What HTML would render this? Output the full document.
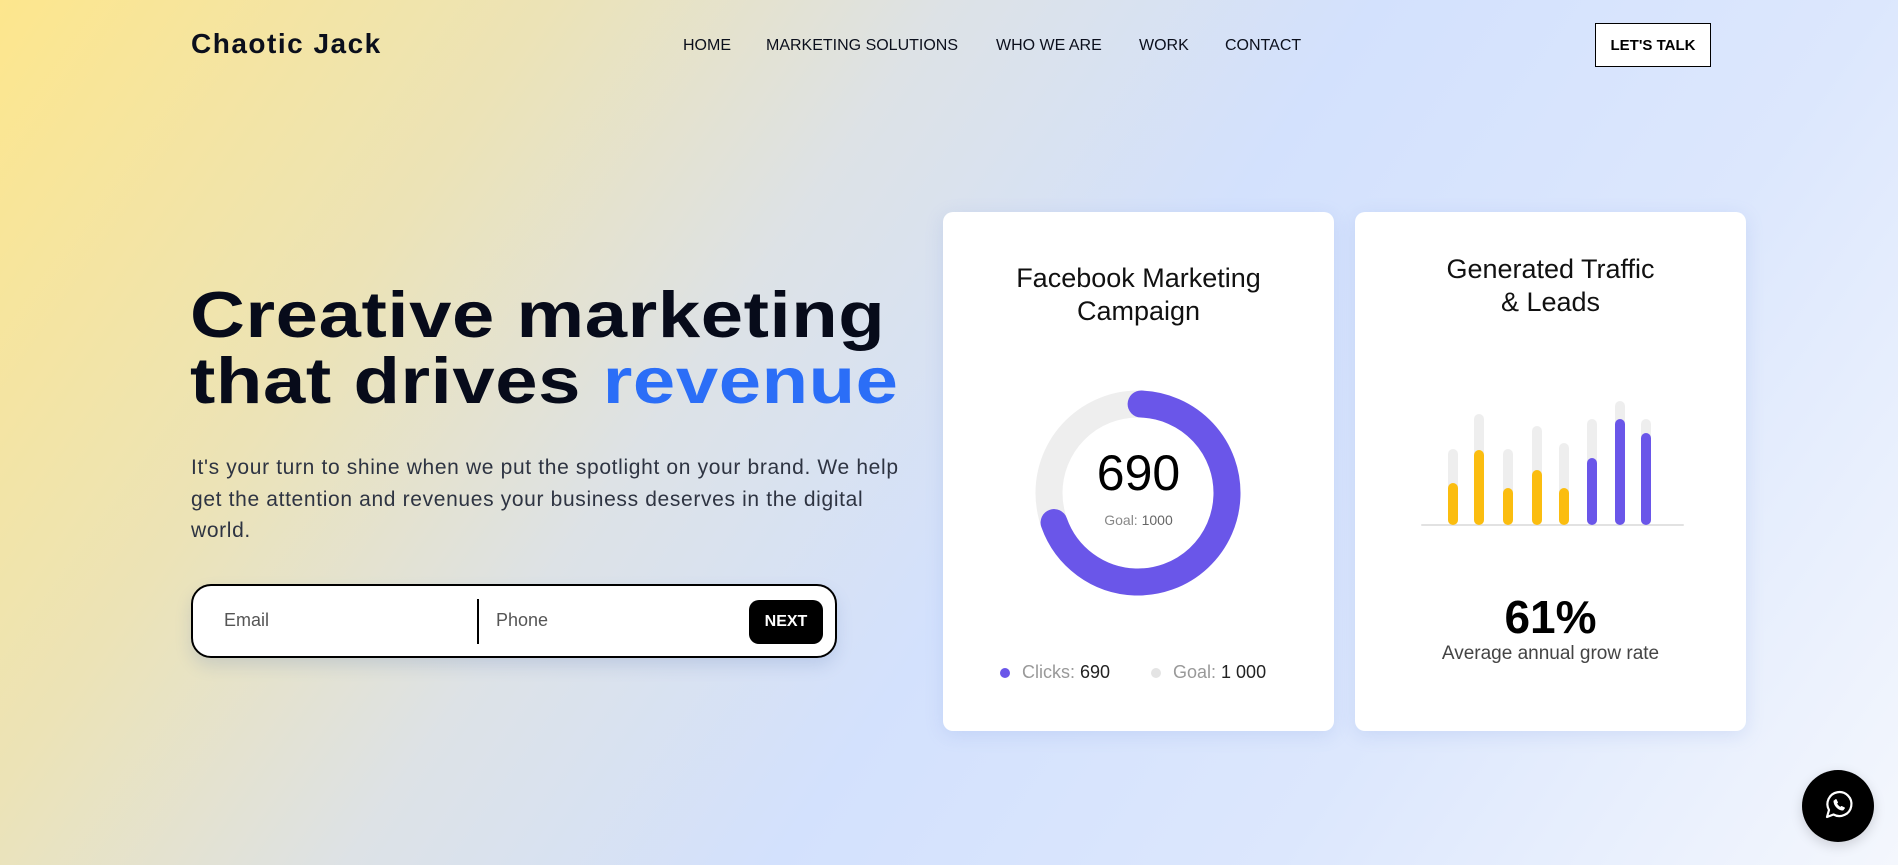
<!DOCTYPE html>
<html><head><meta charset="utf-8"><style>
*{margin:0;padding:0;box-sizing:border-box}
body{width:1898px;height:865px;overflow:hidden;font-family:"Liberation Sans",sans-serif;position:relative;
background:linear-gradient(125deg,#fde68d 0%,#ece3b6 22%,#dde2e6 38%,#d3e1fd 55%,#dce7fd 75%,#f4f7fd 100%);}
.abs{position:absolute}
.logo{left:191px;top:28px;font-size:28px;font-weight:bold;letter-spacing:1.5px;color:#0b0f1c}
.nav{top:37px;font-size:16px;color:#0b0f1c}
.btn{left:1595px;top:23px;width:116px;height:44px;border:1.5px solid #000;background:#fff;font-size:15px;font-weight:bold;display:flex;align-items:center;justify-content:center}
h1{position:absolute;left:190px;top:282px;font-size:65px;line-height:66px;font-weight:bold;color:#070b1a;letter-spacing:0.5px;transform:scaleX(1.17);transform-origin:left top;white-space:nowrap}
h1 span{color:#2b6ef7}
p.lead{position:absolute;left:191px;top:452px;font-size:21px;line-height:31.5px;color:#2e3442;white-space:nowrap;letter-spacing:.65px}
.form{left:191px;top:584px;width:646px;height:74px;border:2px solid #000;border-radius:20px;background:#fff;box-shadow:0 8px 16px rgba(80,110,180,.18)}
.card{background:#fff;border-radius:10px;box-shadow:0 4px 18px rgba(120,150,220,.2)}
.ct{font-size:27px;color:#111;text-align:center;line-height:33px}
</style></head><body>
<div class="abs logo">Chaotic Jack</div>
<div class="abs nav" style="left:683px">HOME</div>
<div class="abs nav" style="left:766px">MARKETING SOLUTIONS</div>
<div class="abs nav" style="left:996px">WHO WE ARE</div>
<div class="abs nav" style="left:1139px">WORK</div>
<div class="abs nav" style="left:1225px">CONTACT</div>
<div class="abs btn">LET'S TALK</div>

<h1>Creative marketing<br>that drives <span>revenue</span></h1>
<p class="lead">It's your turn to shine when we put the spotlight on your brand. We help<br>get the attention and revenues your business deserves in the digital<br>world.</p>

<div class="abs form">
  <div class="abs" style="left:31px;top:24px;font-size:18px;color:#555">Email</div>
  <div class="abs" style="left:284px;top:13px;width:1.5px;height:45px;background:#000"></div>
  <div class="abs" style="left:303px;top:24px;font-size:18px;color:#555">Phone</div>
  <div class="abs" style="left:556px;top:14px;width:74px;height:44px;background:#000;border-radius:10px;color:#fff;font-weight:bold;font-size:16px;display:flex;align-items:center;justify-content:center">NEXT</div>
</div>

<div class="abs card" style="left:943px;top:212px;width:391px;height:519px">
  <div class="abs ct" style="left:0;width:391px;top:50px">Facebook Marketing<br>Campaign</div>
  <svg class="abs" style="left:0;top:0" width="391" height="519">
    <circle cx="195" cy="281" r="89" fill="none" stroke="#eeeeee" stroke-width="27"/>
    <circle cx="195" cy="281" r="89" fill="none" stroke="#6a56e9" stroke-width="27" stroke-linecap="round" stroke-dasharray="386 600" transform="rotate(-88 195 281)"/>
    <circle cx="62" cy="461" r="5" fill="#6a56e9"/>
    <circle cx="213" cy="461" r="5" fill="#e4e4e4"/>
  </svg>
  <div class="abs" style="left:0;width:391px;top:232px;text-align:center;font-size:50px;color:#000">690</div>
  <div class="abs" style="left:0;width:391px;top:300px;text-align:center;font-size:14px;color:#888">Goal: <span style="color:#666">1000</span></div>
  <div class="abs" style="left:79px;top:450px;font-size:18px;color:#999">Clicks: <span style="color:#222">690</span></div>
  <div class="abs" style="left:230px;top:450px;font-size:18px;color:#999">Goal: <span style="color:#222">1 000</span></div>
</div>

<div class="abs card" style="left:1355px;top:212px;width:391px;height:519px">
  <div class="abs ct" style="left:0;width:391px;top:41px">Generated Traffic<br>&amp; Leads</div>
  <svg class="abs" style="left:0;top:0" width="391" height="519" stroke-linecap="round" stroke-width="10">
    <line x1="67" y1="313" x2="328" y2="313" stroke="#e2e2e2" stroke-width="2"/>
    <g stroke="#eeeeee">
      <line x1="98" y1="242" x2="98" y2="308"/><line x1="124" y1="207" x2="124" y2="308"/>
      <line x1="153" y1="242" x2="153" y2="308"/><line x1="182" y1="219" x2="182" y2="308"/>
      <line x1="209" y1="236" x2="209" y2="308"/><line x1="237" y1="212" x2="237" y2="308"/>
      <line x1="265" y1="194" x2="265" y2="308"/><line x1="291" y1="212" x2="291" y2="308"/>
    </g>
    <g stroke="#fbbd0f">
      <line x1="98" y1="276" x2="98" y2="308"/><line x1="124" y1="243" x2="124" y2="308"/>
      <line x1="153" y1="281" x2="153" y2="308"/><line x1="182" y1="263" x2="182" y2="308"/>
      <line x1="209" y1="281" x2="209" y2="308"/>
    </g>
    <g stroke="#6a56e9">
      <line x1="237" y1="251" x2="237" y2="308"/><line x1="265" y1="212" x2="265" y2="308"/>
      <line x1="291" y1="226" x2="291" y2="308"/>
    </g>
  </svg>
  <div class="abs" style="left:0;width:391px;top:378px;text-align:center;font-size:46px;font-weight:bold;color:#000">61%</div>
  <div class="abs" style="left:0;width:391px;top:431px;text-align:center;font-size:19px;color:#444">Average annual grow rate</div>
</div>

<div class="abs" style="left:1802px;top:770px;width:72px;height:72px;border-radius:50%;background:#000;box-shadow:0 4px 12px rgba(0,0,0,.15)">
  <svg width="72" height="72" viewBox="0 0 72 72" fill="none" stroke="#fff" stroke-width="2.2" stroke-linejoin="round">
    <path d="M25 47l2-7a12 12 0 1 1 4.5 4.5z"/>
    <path d="M32 31c0 4 4 9 9 9l1.5-2-3-1.5-1 1c-2-1-3-2-4-4l1-1-1.5-3z" fill="#fff" stroke-width="1"/>
  </svg>
</div>
</body></html>
